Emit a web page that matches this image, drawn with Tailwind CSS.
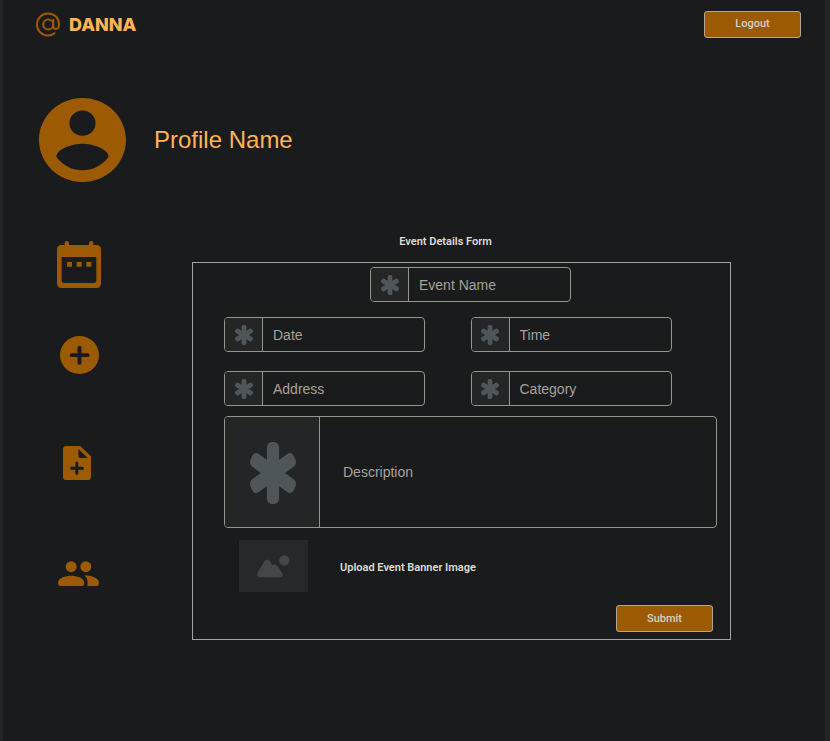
<!DOCTYPE html>
<html lang="en">
<head>
<meta charset="utf-8">
<meta name="viewport" content="width=device-width, initial-scale=1">
<title>Danna – Event Details</title>
<script src="https://cdn.jsdelivr.net/npm/@tailwindcss/browser@4"></script>
</head>
<body class="bg-[#1a1b1c] font-['Liberation_Sans',Arial,sans-serif]">
<svg class="hidden" aria-hidden="true">
  <symbol id="asterisk" viewBox="-87 -94 174 188" preserveAspectRatio="none">
    <rect x="-23" y="-94" width="46" height="188" rx="17"/>
    <rect x="-23" y="-94" width="46" height="188" rx="17" transform="rotate(60)"/>
    <rect x="-23" y="-94" width="46" height="188" rx="17" transform="rotate(-60)"/>
  </symbol>
</svg>
<div class="min-h-screen border-l-[3px] border-r-[5px] border-[#242526]">
  <header class="flex h-12 items-center justify-between pl-8 pr-6">
    <a href="#" class="flex items-center gap-2 font-['Inter',sans-serif] text-lg font-extrabold text-[#ffb454]">
      <svg class="h-[25px] w-[26px] text-[#9c5a02]" viewBox="0 0 26 25" fill="none" stroke="currentColor" stroke-width="2" stroke-linecap="round" aria-hidden="true">
        <path d="M19.500 21.200C17.600 22.800 15.300 23.500 13 23.500C6.500 23.500 2 18.700 2 12.500S6.700 1.500 13 1.500S24 6 24 12.300C24 15.200 22.800 17 20.900 17S18.300 15.700 18.300 14V7.800"/>
        <circle cx="13.200" cy="12.500" r="5"/>
      </svg>
      <span class="pt-px">DANNA</span>
    </a>
    <button type="button" class="h-[27px] w-[97px] rounded-[3px] border border-[#b5a78f] bg-[#9c5a02] pt-px font-['Roboto',sans-serif] text-[11px] font-medium text-[#d5d0c8]">Logout</button>
  </header>

  <section class="flex items-center gap-7 pl-9 pt-[50px]">
    <svg class="h-[84px] w-[87px] text-[#9c5a02]" viewBox="2 2 20 20" preserveAspectRatio="none" fill="currentColor" aria-hidden="true">
      <path d="M12 2C6.480 2 2 6.480 2 12s4.480 10 10 10 10-4.480 10-10S17.520 2 12 2zm0 3c1.660 0 3 1.340 3 3s-1.340 3-3 3-3-1.340-3-3 1.340-3 3-3zm0 14.200c-2.500 0-4.710-1.280-6-3.220.03-1.990 4-3.080 6-3.080 1.990 0 5.970 1.090 6 3.080-1.290 1.940-3.500 3.220-6 3.220z"/>
    </svg>
    <h1 class="text-2xl text-[#ffb454]">Profile Name</h1>
  </section>

  <div class="flex items-start gap-[37px] pr-[94px] pt-[51px]">
    <nav class="flex w-[152px] shrink-0 flex-col items-center pt-2 text-[#9c5a02]">
      <a href="#" aria-label="Events calendar">
        <svg class="h-[47px] w-[44px]" viewBox="52 33 132 141" fill="currentColor" aria-hidden="true">
          <path fill-rule="evenodd" d="M66 45H75V39a6.500 6 0 0 1 13 0V45H148V39a6.500 6 0 0 1 13 0V45H170Q184 45 184 59V160Q184 174 170 174H66Q52 174 52 160V59Q52 45 66 45ZM66 81V152Q66 159 73 159H163Q170 159 170 152V81Z"/>
          <path d="M82 96h15v14H82zM111 96h15v14h-15zM140 96h15v14h-15z"/>
        </svg>
      </a>
      <a href="#" class="mt-12" aria-label="Add event">
        <svg class="h-[38px] w-[39px]" viewBox="59 319 117 114" aria-hidden="true">
          <ellipse cx="117.500" cy="376" rx="58.500" ry="57" fill="currentColor"/>
          <path d="M94 376.500H142" stroke="#1a1b1c" stroke-width="11" stroke-linecap="round"/>
          <path d="M117.500 354V399" stroke="#1a1b1c" stroke-width="12" stroke-linecap="round"/>
        </svg>
      </a>
      <a href="#" class="mt-[72px] pr-1" aria-label="New document">
        <svg class="h-[34px] w-[28px]" viewBox="68 48 85 102" preserveAspectRatio="none" aria-hidden="true">
          <path fill="currentColor" fill-rule="evenodd" d="M78 48H120L153 79V140Q153 150 143 150H78Q68 150 68 140V58Q68 48 78 48ZM115 57V79Q115 84 120 84H143Z"/>
          <path d="M94 115H127M110 99V130" stroke="#1a1b1c" stroke-width="9" stroke-linecap="round"/>
        </svg>
      </a>
      <a href="#" class="mt-[81px] pr-0.5" aria-label="People">
        <svg class="h-[25px] w-[41px]" viewBox="53 393 122 75" fill="currentColor" aria-hidden="true">
          <circle cx="92" cy="410" r="16.500"/>
          <circle cx="136" cy="410" r="16.500"/>
          <path d="M53 462V457C53 443 76 437 92 437S131 443 131 457V462Q131 468 125 468H59Q53 468 53 462Z"/>
          <path d="M132 436C154 437 175 444 175 457V462Q175 468 169 468H141V457C141 448 138 441 132 436Z"/>
        </svg>
      </a>
    </nav>

    <main class="min-w-0 flex-1">
      <h2 class="pt-px pr-8 text-center font-['Roboto',sans-serif] text-[11px] leading-4 font-semibold text-[#dedbd6]">Event Details Form</h2>
      <form class="mt-3 border border-[#a3a4a2] pt-1 pr-[13px] pb-[7px] pl-[31px]">
        <div class="flex justify-center">
          <label class="flex h-[35px] w-[201px] overflow-hidden rounded-[4px] border border-[#96948b]">
            <span class="flex w-[38px] shrink-0 items-center justify-center border-r border-[#96948b] bg-[#242526]"><svg class="h-5 w-[18px] fill-[#4f565a]" aria-hidden="true"><use href="#asterisk"/></svg></span>
            <input type="text" aria-label="Event Name" placeholder="Event Name" class="min-w-0 flex-1 px-[10px] text-sm text-[#a8a298] outline-none placeholder:text-[#a8a298]">
          </label>
        </div>
        <div class="mt-[15px] grid grid-cols-2 gap-y-[19px]">
          <label class="flex h-[35px] w-[201px] overflow-hidden rounded-[4px] border border-[#96948b]">
            <span class="flex w-[38px] shrink-0 items-center justify-center border-r border-[#96948b] bg-[#242526]"><svg class="h-5 w-[18px] fill-[#4f565a]" aria-hidden="true"><use href="#asterisk"/></svg></span>
            <input type="text" aria-label="Date" placeholder="Date" class="min-w-0 flex-1 px-[10px] text-sm text-[#a8a298] outline-none placeholder:text-[#a8a298]">
          </label>
          <label class="flex h-[35px] w-[201px] overflow-hidden rounded-[4px] border border-[#96948b]">
            <span class="flex w-[38px] shrink-0 items-center justify-center border-r border-[#96948b] bg-[#242526]"><svg class="h-5 w-[18px] fill-[#4f565a]" aria-hidden="true"><use href="#asterisk"/></svg></span>
            <input type="text" aria-label="Time" placeholder="Time" class="min-w-0 flex-1 px-[10px] text-sm text-[#a8a298] outline-none placeholder:text-[#a8a298]">
          </label>
          <label class="flex h-[35px] w-[201px] overflow-hidden rounded-[4px] border border-[#96948b]">
            <span class="flex w-[38px] shrink-0 items-center justify-center border-r border-[#96948b] bg-[#242526]"><svg class="h-5 w-[18px] fill-[#4f565a]" aria-hidden="true"><use href="#asterisk"/></svg></span>
            <input type="text" aria-label="Address" placeholder="Address" class="min-w-0 flex-1 px-[10px] text-sm text-[#a8a298] outline-none placeholder:text-[#a8a298]">
          </label>
          <label class="flex h-[35px] w-[201px] overflow-hidden rounded-[4px] border border-[#96948b]">
            <span class="flex w-[38px] shrink-0 items-center justify-center border-r border-[#96948b] bg-[#242526]"><svg class="h-5 w-[18px] fill-[#4f565a]" aria-hidden="true"><use href="#asterisk"/></svg></span>
            <input type="text" aria-label="Category" placeholder="Category" class="min-w-0 flex-1 px-[10px] text-sm text-[#a8a298] outline-none placeholder:text-[#a8a298]">
          </label>
        </div>
        <label class="mt-[10px] flex h-28 items-center overflow-hidden rounded-[4px] border border-[#96948b]">
          <span class="flex w-[95px] shrink-0 items-center justify-center self-stretch border-r border-[#96948b] bg-[#242526] pt-0.5 pl-0.5"><svg class="h-[62px] w-[46px] fill-[#4f565a]" aria-hidden="true"><use href="#asterisk"/></svg></span>
          <textarea rows="1" aria-label="Description" placeholder="Description" class="min-w-0 flex-1 resize-none px-[23px] text-sm text-[#a8a298] outline-none placeholder:text-[#a8a298]"></textarea>
        </label>
        <div class="mt-3 pl-[15px]">
          <label for="banner" class="flex items-center gap-8 font-['Roboto',sans-serif] text-[11px] leading-4 font-semibold text-[#dedbd6]">
            <svg class="h-[52px] w-[69px] bg-[#25292b]" viewBox="164 404 207 156" fill="#43474a" aria-hidden="true">
              <path d="M221 501L240 468Q248 457 257 468L264 480Q273 474 281 484L294 504Q298 516 287 516H227Q217 515 219 506Z"/>
              <circle cx="300" cy="465" r="15.500"/>
            </svg>
            <span class="pt-1">Upload Event Banner Image</span>
          </label>
          <input id="banner" type="file" accept="image/*" class="sr-only">
        </div>
        <div class="mt-[13px] flex justify-end pr-1">
          <button type="submit" class="h-[27px] w-[97px] rounded-[3px] border border-[#b5a78f] bg-[#9c5a02] pt-px font-['Roboto',sans-serif] text-[11px] font-medium text-[#d5d0c8]">Submit</button>
        </div>
      </form>
    </main>
  </div>
</div>
</body>
</html>
